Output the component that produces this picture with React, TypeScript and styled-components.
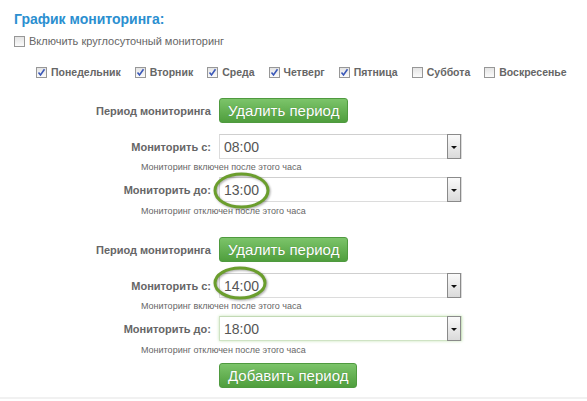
import { FC } from "react";
import styled, { createGlobalStyle } from "styled-components";

const GlobalStyle = createGlobalStyle`
  html, body {
    margin: 0;
    padding: 0;
    background: #fff;
  }
`;

const Page = styled.div`
  width: 587px;
  padding-top: 11px;
  padding-bottom: 9px;
  border-bottom: 2px solid #f1f1f1;
  font-family: "Liberation Sans", Arial, sans-serif;
  color: #666666;
`;

const Title = styled.h2`
  margin: 0 0 0 14px;
  font-size: 14px;
  line-height: 16px;
  font-weight: 700;
  color: #2b8fd0;
`;

const AllDayRow = styled.label`
  display: flex;
  align-items: center;
  gap: 4px;
  margin: 7px 0 0 14px;
  height: 14px;
  font-size: 11px;
  color: #666;
`;

const DaysRow = styled.div`
  display: flex;
  align-items: center;
  margin-top: 17px;
  padding-left: 36px;
  height: 14px;
  gap: 14px;
`;

const Day = styled.label`
  display: flex;
  align-items: center;
  gap: 4px;
  font-size: 10.5px;
  font-weight: 700;
  color: #666;
  white-space: nowrap;
`;

const Box = styled.span`
  display: inline-flex;
  align-items: center;
  justify-content: center;
  width: 9px;
  height: 9px;
  border: 1px solid #979797;
  background: linear-gradient(#e4e4e4, #fbfbfb);
  flex: none;
`;

const CheckBox: FC<{ checked?: boolean }> = ({ checked }) => (
  <Box>
    {checked && (
      <svg width="9" height="9" viewBox="0 0 9 9">
        <path d="M1.5 4.5 L3.5 7 L7.5 1.2" fill="none" stroke="#3b58b8" strokeWidth="1.6" />
      </svg>
    )}
  </Box>
);

const Period = styled.div<{ $first?: boolean }>`
  margin-top: ${(p) => (p.$first ? 19 : 20)}px;
`;

const Row = styled.div<{ $gap?: number }>`
  display: grid;
  grid-template-columns: 211px 243px;
  column-gap: 8px;
  align-items: center;
  margin-top: ${(p) => p.$gap ?? 0}px;
`;

const Label = styled.span`
  text-align: right;
  font-size: 11px;
  font-weight: 700;
  color: #666;
`;

const GreenButton = styled.button`
  justify-self: start;
  height: 25px;
  padding: 0 8px;
  border: 1px solid #4f9a3f;
  border-radius: 3px;
  background: linear-gradient(#7cc46a, #4f9e3d);
  color: #fff;
  font-family: "Liberation Sans", Arial, sans-serif;
  font-size: 15px;
  line-height: 22px;
  text-shadow: 0 0 1px rgba(0, 0, 0, 0.25);
  cursor: pointer;
`;

const SelectBox = styled.div<{ $focus?: boolean }>`
  position: relative;
  display: flex;
  align-items: center;
  height: 25px;
  box-sizing: border-box;
  border: 1px solid ${(p) => (p.$focus ? "#cfe3c4" : "#dcdcdc")};
  border-top-color: ${(p) => (p.$focus ? "#c2d9b5" : "#cfcfcf")};
  box-shadow: ${(p) => (p.$focus ? "0 0 3px #c9e5b9" : "none")};
  background: #fff;
  padding-left: 4px;
  font-size: 14px;
  color: #555;
`;

const Arrow = styled.span`
  position: absolute;
  right: 0;
  top: -1px;
  width: 14px;
  height: 25px;
  box-sizing: border-box;
  border: 1px solid #8a8a8a;
  background: linear-gradient(#fafafa, #dadada);
  display: flex;
  align-items: center;
  justify-content: center;

  &::after {
    content: "";
    border-left: 3px solid transparent;
    border-right: 3px solid transparent;
    border-top: 3px solid #111;
    margin-top: 1px;
  }
`;

const Hint = styled.div<{ $gap?: number }>`
  margin-top: ${(p) => p.$gap ?? 2}px;
  padding-left: 141px;
  font-size: 9px;
  line-height: 12px;
  color: #666;
`;

const Circle = styled.svg`
  position: absolute;
  left: -7px;
  pointer-events: none;
  overflow: visible;
`;

const Mark: FC<{ w: number; h: number; dy?: number }> = ({ w, h, dy = 0 }) => (
  <Circle width={w} height={h} style={{ top: -6 + dy }}>
    <ellipse
      cx={w / 2}
      cy={h / 2}
      rx={w / 2 - 2}
      ry={h / 2 - 2}
      fill="none"
      stroke="#6b9e2d"
      strokeWidth="3"
      style={{ filter: "drop-shadow(1px 1px 1px rgba(0,0,0,0.35))" }}
    />
  </Circle>
);

const TimeSelect: FC<{ value: string; focus?: boolean; mark?: { w: number; h: number; dy?: number } }> = ({
  value,
  focus,
  mark,
}) => (
  <SelectBox $focus={focus}>
    {value}
    <Arrow />
    {mark && <Mark {...mark} />}
  </SelectBox>
);

const AddRow = styled.div`
  margin-top: 7px;
  padding-left: 219px;
`;

const days = [
  { name: "Понедельник", on: true },
  { name: "Вторник", on: true },
  { name: "Среда", on: true },
  { name: "Четверг", on: true },
  { name: "Пятница", on: true },
  { name: "Суббота", on: false },
  { name: "Воскресенье", on: false },
];

type PeriodData = {
  from: string;
  to: string;
  fromMark?: boolean;
  toMark?: boolean;
  toFocus?: boolean;
};

const periods: PeriodData[] = [
  { from: "08:00", to: "13:00", toMark: true },
  { from: "14:00", to: "18:00", fromMark: true, toFocus: true },
];

const App: FC = () => (
  <>
    <GlobalStyle />
    <Page>
      <Title>График мониторинга:</Title>
      <AllDayRow>
        <CheckBox />
        Включить круглосуточный мониторинг
      </AllDayRow>
      <DaysRow>
        {days.map((d) => (
          <Day key={d.name}>
            <CheckBox checked={d.on} />
            {d.name}
          </Day>
        ))}
      </DaysRow>
      {periods.map((p, i) => (
        <Period key={i} $first={i === 0}>
          <Row>
            <Label>Период мониторинга</Label>
            <GreenButton>Удалить период</GreenButton>
          </Row>
          <Row $gap={11}>
            <Label>Мониторить с:</Label>
            <TimeSelect value={p.from} mark={p.fromMark ? { w: 54, h: 34, dy: -2 } : undefined} />
          </Row>
          <Hint>Мониторинг включен после этого часа</Hint>
          <Row $gap={4}>
            <Label>Мониторить до:</Label>
            <TimeSelect
              value={p.to}
              focus={p.toFocus}
              mark={p.toMark ? { w: 57, h: 37 } : undefined}
            />
          </Row>
          <Hint $gap={3}>Мониторинг отключен после этого часа</Hint>
        </Period>
      ))}
      <AddRow>
        <GreenButton>Добавить период</GreenButton>
      </AddRow>
    </Page>
  </>
);

export default App;
